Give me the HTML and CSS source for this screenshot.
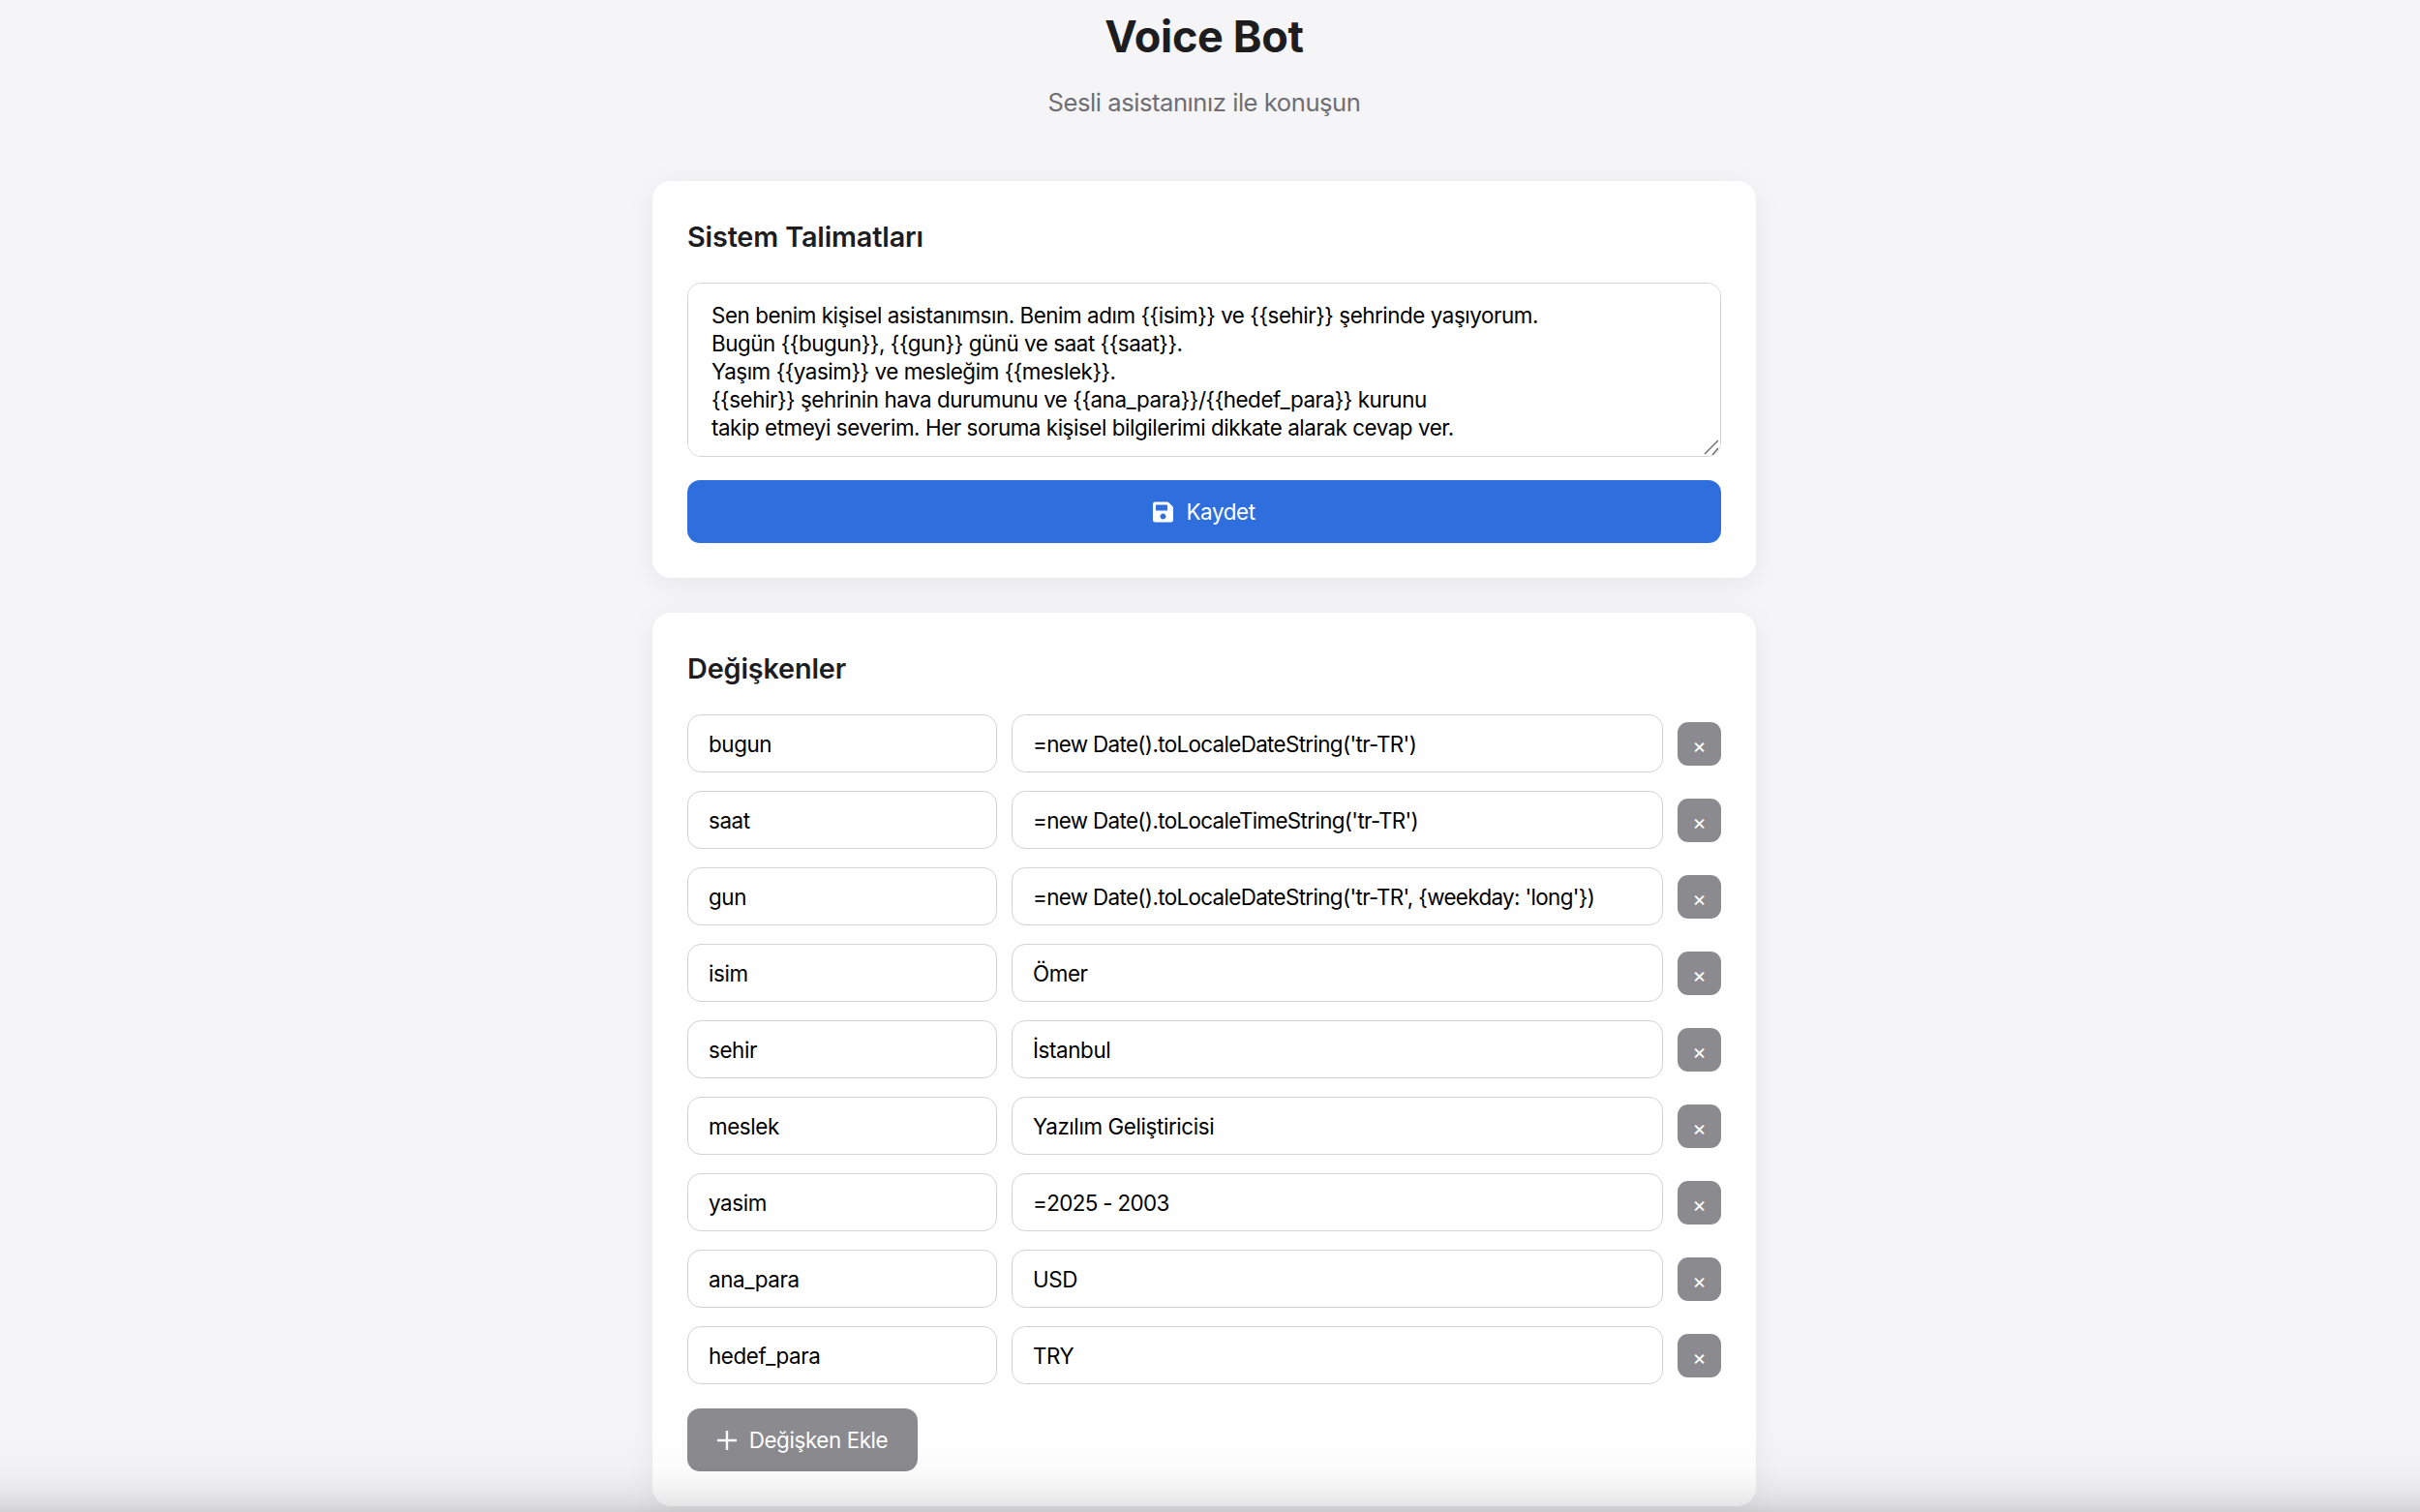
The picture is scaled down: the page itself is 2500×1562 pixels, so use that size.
FILE: index.html
```html
<!DOCTYPE html>
<html lang="tr">
  <head>
    <meta charset="UTF-8" />
    <meta name="viewport" content="width=device-width, initial-scale=1.0" />
    <title>Voice Bot</title>
    <link rel="stylesheet" href="styles.css">
  </head>
  <body>
    <main class="container">
      <header class="page-header">
        <h1>Voice Bot</h1>
        <p>Sesli asistanınız ile konuşun</p>
      </header>

      <!-- System prompt -->
      <section class="card">
        <h2>Sistem Talimatları</h2>
        <div class="prompt-wrap">
          <textarea class="prompt" spellcheck="false">Sen benim kişisel asistanımsın. Benim adım {{isim}} ve {{sehir}} şehrinde yaşıyorum.
Bugün {{bugun}}, {{gun}} günü ve saat {{saat}}.
Yaşım {{yasim}} ve mesleğim {{meslek}}.
{{sehir}} şehrinin hava durumunu ve {{ana_para}}/{{hedef_para}} kurunu
takip etmeyi severim. Her soruma kişisel bilgilerimi dikkate alarak cevap ver.</textarea>
          <svg class="resize-grip" viewBox="0 0 16 16" aria-hidden="true"><path d="M2 15L16 1M10 16l6-7" stroke="#707070" stroke-width="1.5" fill="none"/></svg>
        </div>
        <button class="btn btn-primary" type="button">
          <svg class="save-icon" viewBox="0 0 448 512" aria-hidden="true"><path fill="currentColor" d="M433.941 129.941l-83.882-83.882A48 48 0 0 0 316.118 32H48C21.49 32 0 53.49 0 80v352c0 26.51 21.49 48 48 48h352c26.51 0 48-21.49 48-48V163.882a48 48 0 0 0-14.059-33.941zM224 416c-35.346 0-64-28.654-64-64 0-35.346 28.654-64 64-64s64 28.654 64 64c0 35.346-28.654 64-64 64zm96-304.52V212c0 6.627-5.373 12-12 12H76c-6.627 0-12-5.373-12-12V108c0-6.627 5.373-12 12-12h228.52c3.183 0 6.235 1.264 8.485 3.515l3.48 3.48A11.996 11.996 0 0 1 320 111.48z"/></svg>
          Kaydet
        </button>
      </section>

      <!-- Variables -->
      <section class="card">
        <h2>Değişkenler</h2>
        <div class="var-list">
          <div class="var-row">
            <input class="field var-name" type="text" value="bugun" />
            <input class="field var-value var-code" type="text" value="=new Date().toLocaleDateString('tr-TR')" />
            <button class="btn-remove" type="button">×</button>
          </div>
          <div class="var-row">
            <input class="field var-name" type="text" value="saat" />
            <input class="field var-value var-code" type="text" value="=new Date().toLocaleTimeString('tr-TR')" />
            <button class="btn-remove" type="button">×</button>
          </div>
          <div class="var-row">
            <input class="field var-name" type="text" value="gun" />
            <input class="field var-value var-code" type="text" value="=new Date().toLocaleDateString('tr-TR', {weekday: 'long'})" />
            <button class="btn-remove" type="button">×</button>
          </div>
          <div class="var-row">
            <input class="field var-name" type="text" value="isim" />
            <input class="field var-value" type="text" value="Ömer" />
            <button class="btn-remove" type="button">×</button>
          </div>
          <div class="var-row">
            <input class="field var-name" type="text" value="sehir" />
            <input class="field var-value" type="text" value="İstanbul" />
            <button class="btn-remove" type="button">×</button>
          </div>
          <div class="var-row">
            <input class="field var-name" type="text" value="meslek" />
            <input class="field var-value" type="text" value="Yazılım Geliştiricisi" />
            <button class="btn-remove" type="button">×</button>
          </div>
          <div class="var-row">
            <input class="field var-name" type="text" value="yasim" />
            <input class="field var-value var-code" type="text" value="=2025 - 2003" />
            <button class="btn-remove" type="button">×</button>
          </div>
          <div class="var-row">
            <input class="field var-name" type="text" value="ana_para" />
            <input class="field var-value" type="text" value="USD" />
            <button class="btn-remove" type="button">×</button>
          </div>
          <div class="var-row">
            <input class="field var-name" type="text" value="hedef_para" />
            <input class="field var-value" type="text" value="TRY" />
            <button class="btn-remove" type="button">×</button>
          </div>
        </div>
        <button class="btn btn-add" type="button">
          <svg class="plus-icon" viewBox="0 0 20 20" aria-hidden="true"><path d="M10 0v20M0 10h20" stroke="currentColor" stroke-width="2.4" fill="none"/></svg>
          Değişken Ekle
        </button>
      </section>
    </main>

    <!-- Fade at the bottom of the window -->
    <div class="bottom-fade"></div>
  </body>
</html>
```

FILE: styles.css
```css
* {
  box-sizing: border-box;
}
html,
body {
  height: 1562px;
  overflow: hidden;
}
body {
  margin: 0;
  padding-right: 12px;
  font-family: Inter, "Open Sans", sans-serif;
  background-color: #f5f5f7;
  color: #1d1d1f;
}
.container {
  width: 1140px;
  margin: 0 auto;
}
.page-header {
  text-align: center;
  height: 187px;
  padding-top: 9px;
}
h1 {
  margin: 0;
  font-size: 45px;
  line-height: 58px;
  font-weight: 700;
  letter-spacing: -0.35px;
}
.page-header p {
  margin: 23px 0 0;
  font-size: 25.6px;
  line-height: 32px;
  letter-spacing: -0.46px;
  color: #6e6e73;
}
.card {
  background-color: #fff;
  border-radius: 19px;
  padding: 36px;
  margin-bottom: 36px;
  box-shadow: 0 6px 32px rgba(0, 0, 0, 0.06);
}
h2 {
  margin: 0 0 28px;
  padding-top: 3px;
  font-size: 28.8px;
  line-height: 38px;
  font-weight: 600;
  letter-spacing: -0.15px;
}
.prompt-wrap {
  position: relative;
}
.prompt {
  display: block;
  width: 100%;
  height: 180px;
  padding: 18px 24px;
  border: 1.6px solid #d2d2d7;
  border-radius: 14px;
  font-family: inherit;
  font-size: 22.4px;
  line-height: 29px;
  letter-spacing: -0.45px;
  color: #000;
  background: #fff;
  resize: none;
}
.resize-grip {
  position: absolute;
  right: 3px;
  bottom: 2px;
  width: 16px;
  height: 16px;
}
.btn {
  display: flex;
  align-items: center;
  justify-content: center;
  border: none;
  border-radius: 13px;
  height: 65px;
  font-family: inherit;
  font-size: 22.4px;
  letter-spacing: -0.4px;
  color: #fff;
}
.btn-primary {
  width: 100%;
  margin-top: 24px;
  gap: 13px;
  background-color: #2f6fdd;
}
.save-icon {
  width: 21px;
  height: 24px;
}
.btn-add {
  width: 238px;
  margin-top: 25px;
  gap: 13px;
  background-color: #8a8a8f;
}
.plus-icon {
  width: 20px;
  height: 20px;
}
.var-list {
  display: flex;
  flex-direction: column;
  gap: 19px;
}
.var-row {
  display: flex;
  align-items: center;
  gap: 15px;
}
.field {
  height: 60px;
  padding: 0 21px;
  border: 1.6px solid #d2d2d7;
  border-radius: 14px;
  font-family: inherit;
  font-size: 22.4px;
  letter-spacing: -0.4px;
  color: #000;
  background: #fff;
}
.var-name {
  width: 320px;
}
.var-value {
  flex: 1;
  min-width: 0;
}
.var-code {
  letter-spacing: -0.65px;
}
.btn-remove {
  width: 45px;
  height: 45px;
  padding: 4px 0 0;
  border: none;
  border-radius: 11px;
  background-color: #8a8a8f;
  color: #fff;
  font-family: inherit;
  font-size: 22px;
}
.bottom-fade {
  position: fixed;
  left: 0;
  right: 0;
  bottom: 0;
  height: 80px;
  background: linear-gradient(
    to bottom,
    rgba(0, 0, 0, 0),
    rgba(0, 0, 0, 0.015) 47%,
    rgba(0, 0, 0, 0.05) 72%,
    rgba(0, 0, 0, 0.1) 91%,
    rgba(0, 0, 0, 0.15)
  );
  pointer-events: none;
}
```
